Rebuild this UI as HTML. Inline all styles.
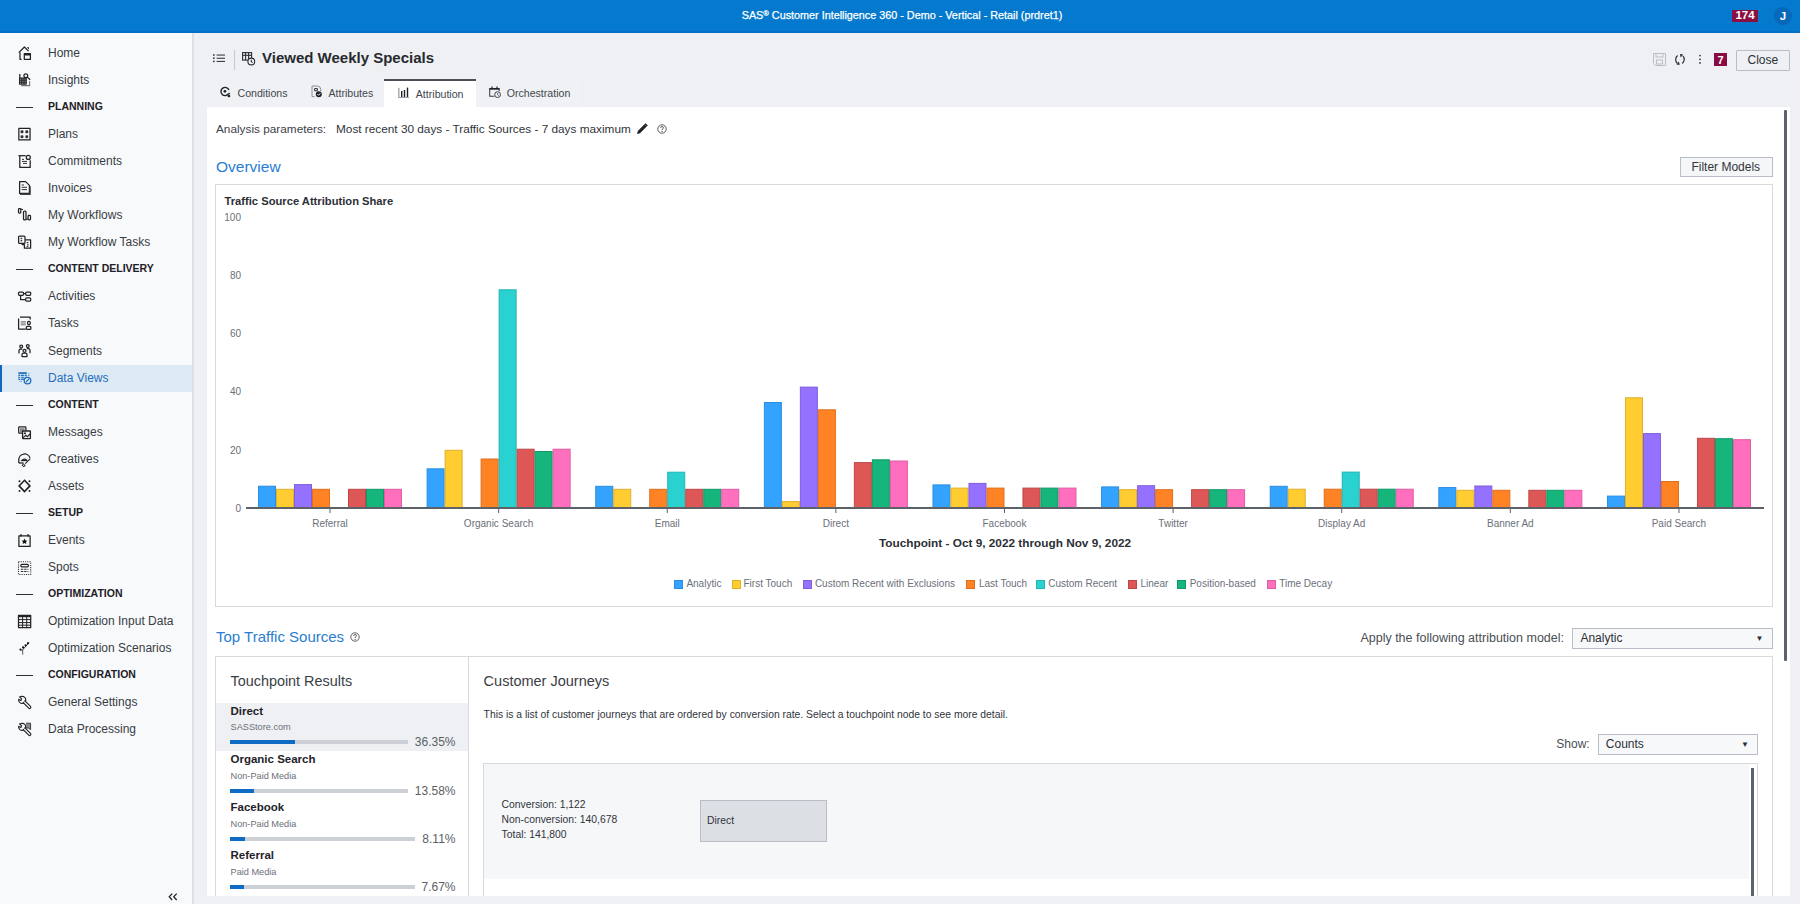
<!DOCTYPE html>
<html><head><meta charset="utf-8"><title>SAS Customer Intelligence 360</title>
<style>
html,body{margin:0;padding:0;}
body{width:1800px;height:904px;overflow:hidden;position:relative;font-family:"Liberation Sans", sans-serif;background:#eff0f3;}
.t{position:absolute;white-space:nowrap;line-height:1;}
.b{position:absolute;}
</style></head><body>
<div class="b" style="left:0px;top:0px;width:1800px;height:904px;background:#eff0f3"></div><div class="b" style="left:0px;top:0px;width:1800px;height:33px;background:#0479cd"></div><div class="b" style="left:0px;top:31px;width:1800px;height:2px;background:#0370c6"></div><div class="t" style="left:602px;width:600px;text-align:center;top:10px;font-size:10.8px;color:#ffffff;font-weight:400;letter-spacing:0px;-webkit-text-stroke:0.25px #fff">SAS<span style="font-size:7.5px;position:relative;top:-3px">®</span> Customer Intelligence 360 - Demo - Vertical - Retail (prdret1)</div><div class="b" style="left:1732px;top:10px;width:26px;height:12px;background:#8c0f42"></div><div class="t" style="left:1445px;width:600px;text-align:center;top:10px;font-size:11.5px;color:#ffffff;font-weight:700;">174</div><div class="b" style="left:1774px;top:7px;width:18px;height:18px;background:#0568b9;border-radius:50%"></div><div class="t" style="left:1483px;width:600px;text-align:center;top:11px;font-size:11.5px;color:#ffffff;font-weight:700;">J</div><div class="b" style="left:0px;top:33px;width:192px;height:871px;background:#f8f9fb"></div><div class="b" style="left:192px;top:33px;width:2px;height:871px;background:#dcdfe4"></div><svg class="b" style="left:14px;top:42px;" width="24" height="24" viewBox="0 0 24 24"><g fill="none" stroke="#222" stroke-width="1.25" stroke-linejoin="round" stroke-width="1.35"><path d="M4.8 10.6 L10.4 5 L14.6 9.1"/><path d="M6 10.2 V17.4 H7.6"/><rect x="10.3" y="11.7" width="6.1" height="5.7"/></g><rect x="10.3" y="11.6" width="6.1" height="1.9" fill="#222"/><path d="M12.8 5.3 H15 V7.6Z" fill="#222"/></svg><div class="t" style="left:48px;top:47px;font-size:12px;color:#383c43;font-weight:400;">Home</div><svg class="b" style="left:14px;top:69px;" width="24" height="24" viewBox="0 0 24 24"><g fill="none" stroke="#222" stroke-width="1.25" stroke-linejoin="round" stroke-width="1.15"><rect x="5.6" y="9" width="6.6" height="6"/><path d="M5.6 11 H12.2 M5.6 13 H12.2 M7.8 9 V15 M10 9 V15"/><path d="M5.8 5 V9"/><circle cx="11.8" cy="6.7" r="1.9"/><path d="M13.2 8.1 L16.2 10.8"/></g><path d="M7.2 16.6 H15.6 V12.3" fill="none" stroke="#777" stroke-width="1.2"/></svg><div class="t" style="left:48px;top:74px;font-size:12px;color:#383c43;font-weight:400;">Insights</div><div class="b" style="left:16px;top:107px;width:17px;height:1.3px;background:#2a2d33"></div><div class="t" style="left:48px;top:101px;font-size:10.5px;color:#1d2026;font-weight:700;">PLANNING</div><svg class="b" style="left:14px;top:123px;" width="24" height="24" viewBox="0 0 24 24"><g fill="none" stroke="#222" stroke-width="1.25" stroke-linejoin="round" stroke-width="1.3"><rect x="4.85" y="5.45" width="11.2" height="11.5"/></g><g fill="#333"><rect x="6.5" y="7.3" width="3" height="3" rx="1.1"/><rect x="11.3" y="7.3" width="3" height="3" rx="1.1"/><rect x="6.5" y="12.2" width="3" height="3" rx="1.1"/><rect x="11.3" y="12.2" width="3" height="3" rx="1.1"/></g></svg><div class="t" style="left:48px;top:128px;font-size:12px;color:#383c43;font-weight:400;">Plans</div><svg class="b" style="left:14px;top:150px;" width="24" height="24" viewBox="0 0 24 24"><g fill="none" stroke="#222" stroke-width="1.25" stroke-linejoin="round" stroke-width="1.2"><path d="M4.5 5.7 H11.6"/><path d="M5.8 5.7 V17.4 H16.2 V10.2"/><circle cx="14.3" cy="7.4" r="2"/></g><g stroke="#333" stroke-width="1"><path d="M8 9.4 H10 M8 11.4 H13 M9 13.4 H13"/></g></svg><div class="t" style="left:48px;top:155px;font-size:12px;color:#383c43;font-weight:400;">Commitments</div><svg class="b" style="left:14px;top:177px;" width="24" height="24" viewBox="0 0 24 24"><g fill="none" stroke="#222" stroke-width="1.25" stroke-linejoin="round" stroke-width="1.2"><path d="M5.6 4.6 H11.6 L15.4 8.4 V16.4 H5.6 Z"/></g><path d="M6 17.4 H16.2 V9.2" fill="none" stroke="#444" stroke-width="1.2"/><g stroke="#333" stroke-width="1"><path d="M7.6 8 H10 M7.6 10.3 H13 M7.6 12.6 H13"/></g></svg><div class="t" style="left:48px;top:182px;font-size:12px;color:#383c43;font-weight:400;">Invoices</div><svg class="b" style="left:14px;top:204px;" width="24" height="24" viewBox="0 0 24 24"><g fill="none" stroke="#222" stroke-width="1.25" stroke-linejoin="round" stroke-width="1.2"><rect x="4.5" y="4.7" width="2.3" height="4.4" rx="0.8"/><rect x="9.5" y="7.2" width="2.5" height="8.6" rx="0.9"/><rect x="14.1" y="11.4" width="2.4" height="4.4" rx="0.8"/></g><path d="M7 5 L9 5.6 M12 15.4 L14 15" stroke="#222" stroke-width="1"/></svg><div class="t" style="left:48px;top:209px;font-size:12px;color:#383c43;font-weight:400;">My Workflows</div><svg class="b" style="left:14px;top:231px;" width="24" height="24" viewBox="0 0 24 24"><g fill="none" stroke="#222" stroke-width="1.25" stroke-linejoin="round" stroke-width="1.25"><rect x="4.6" y="5" width="6.4" height="7.4" rx="0.9"/><path d="M11 8.8 H16.6 V17.2 H10.4 V13.6 H8.2 V12.4"/></g><g fill="#333"><rect x="6.6" y="6.8" width="1.6" height="1.4"/><rect x="6.6" y="9" width="1.6" height="1.4"/><rect x="12.6" y="11" width="1.8" height="1.2"/><rect x="13" y="13.2" width="1.6" height="1.2"/><rect x="12.6" y="15" width="1.8" height="1"/></g></svg><div class="t" style="left:48px;top:236px;font-size:12px;color:#383c43;font-weight:400;">My Workflow Tasks</div><div class="b" style="left:16px;top:269px;width:17px;height:1.3px;background:#2a2d33"></div><div class="t" style="left:48px;top:263px;font-size:10.5px;color:#1d2026;font-weight:700;">CONTENT DELIVERY</div><svg class="b" style="left:14px;top:285px;" width="24" height="24" viewBox="0 0 24 24"><g fill="none" stroke="#222" stroke-width="1.25" stroke-linejoin="round" stroke-width="1.25"><rect x="4.5" y="7.1" width="5" height="3.2" rx="1"/><rect x="11.7" y="7.1" width="5" height="3.2" rx="1"/><rect x="11.7" y="12.9" width="5" height="3.2" rx="1"/><path d="M6.6 10.3 V14.5 H11.7 M9.5 8.7 H11.7"/></g></svg><div class="t" style="left:48px;top:290px;font-size:12px;color:#383c43;font-weight:400;">Activities</div><svg class="b" style="left:14px;top:312px;" width="24" height="24" viewBox="0 0 24 24"><g fill="none" stroke="#222" stroke-width="1.25" stroke-linejoin="round" stroke-width="1.25"><path d="M6 5.2 H16.2 V7.6"/><path d="M4.6 6.6 V17 H11.8"/><rect x="13.6" y="9.4" width="2.6" height="3.2" rx="1"/><rect x="12.3" y="14.4" width="4.6" height="3" rx="1"/></g><rect x="6.8" y="9" width="5" height="4.4" fill="#888"/><path d="M6.8 10.4 H11.8 M6.8 11.9 H11.8" stroke="#f8f9fb" stroke-width="0.5"/></svg><div class="t" style="left:48px;top:317px;font-size:12px;color:#383c43;font-weight:400;">Tasks</div><svg class="b" style="left:14px;top:340px;" width="24" height="24" viewBox="0 0 24 24"><g fill="none" stroke="#222" stroke-width="1.25" stroke-linejoin="round" stroke-width="1.2"><circle cx="7.2" cy="6.6" r="1.4"/><circle cx="13.8" cy="6.1" r="1.4"/><circle cx="10.5" cy="10.8" r="1.5"/><path d="M5 13.6 V10.7 Q5 9.2 6.6 9.2 H8.2"/><path d="M16 13.2 V10.3 Q16 8.7 14.4 8.7 H12.8"/><path d="M8 16.6 V14.6 Q8 13 9.6 13 H11.4 Q13 13 13 14.6 V16.6 Z"/></g></svg><div class="t" style="left:48px;top:345px;font-size:12px;color:#383c43;font-weight:400;">Segments</div><div class="b" style="left:0px;top:365px;width:192px;height:27px;background:#dde9f3"></div><div class="b" style="left:0px;top:365px;width:1.5px;height:27px;background:#1565c0"></div><svg class="b" style="left:14px;top:367px;" width="24" height="24" viewBox="0 0 24 24"><rect x="4.4" y="5.2" width="8.4" height="7.8" fill="#1f6fbf"/><g stroke="#dde9f3" stroke-width="0.8"><path d="M4.4 7.4 H12.8 M4.4 9.5 H12.8 M4.4 11.3 H12.8 M6.6 7.4 V13 M10.4 7.4 V13"/></g><circle cx="13.5" cy="13.6" r="3.3" fill="#dde9f3" stroke="#1f6fbf" stroke-width="1.3"/><path d="M12 15 L15 12" stroke="#1f6fbf" stroke-width="1.1"/><path d="M14.8 6.2 V9.6" stroke="#1f6fbf" stroke-width="1" stroke-dasharray="1 0.8"/><path d="M5.6 14.4 H8" stroke="#1f6fbf" stroke-width="0.8" stroke-dasharray="0.8 0.6"/></svg><div class="t" style="left:48px;top:372px;font-size:12px;color:#1f6fbf;font-weight:400;">Data Views</div><div class="b" style="left:16px;top:405px;width:17px;height:1.3px;background:#2a2d33"></div><div class="t" style="left:48px;top:399px;font-size:10.5px;color:#1d2026;font-weight:700;">CONTENT</div><svg class="b" style="left:14px;top:421px;" width="24" height="24" viewBox="0 0 24 24"><g fill="none" stroke="#222" stroke-width="1.25" stroke-linejoin="round" stroke-width="1.25"><rect x="4.7" y="5.9" width="7.2" height="6.3" rx="0.8"/></g><rect x="6" y="7.2" width="4.6" height="3.8" fill="#888"/><rect x="8.6" y="10" width="7.8" height="7.7" rx="0.5" fill="#f8f9fb" stroke="#222" stroke-width="1.3"/><circle cx="11" cy="12.2" r="1" fill="#222"/><path d="M9.2 16.6 L11.8 14.3 L13.4 15.6 L16 13" fill="none" stroke="#222" stroke-width="1.2"/></svg><div class="t" style="left:48px;top:426px;font-size:12px;color:#383c43;font-weight:400;">Messages</div><svg class="b" style="left:14px;top:448px;" width="24" height="24" viewBox="0 0 24 24"><g fill="none" stroke="#222" stroke-width="1.25" stroke-linejoin="round" stroke-width="1.25"><path d="M4.8 15 V11.6 A5.7 5.7 0 0 1 16 10.2"/><path d="M7.4 12.8 Q10.2 9.8 13 12.4 Z" stroke-width="1.1"/><path d="M4.8 15 H9.5"/></g><path d="M16.3 10.6 L11.2 15.6" stroke="#222" stroke-width="1.1"/><path d="M9.4 15.2 L11.8 17.4 L9.8 19.2 L7.6 17.2Z" fill="#222"/><circle cx="9.7" cy="17.2" r="0.7" fill="#f8f9fb"/></svg><div class="t" style="left:48px;top:453px;font-size:12px;color:#383c43;font-weight:400;">Creatives</div><svg class="b" style="left:14px;top:475px;" width="24" height="24" viewBox="0 0 24 24"><path d="M10.5 5.3 L15.9 10.9 L10.5 16.6 L5.1 10.9 Z" fill="none" stroke="#222" stroke-width="1.6" stroke-linejoin="miter"/><g fill="#111"><circle cx="5.5" cy="6.3" r="0.95"/><circle cx="15.5" cy="6.3" r="0.95"/><circle cx="5.5" cy="15.9" r="0.95"/><circle cx="15.5" cy="15.9" r="0.95"/></g></svg><div class="t" style="left:48px;top:480px;font-size:12px;color:#383c43;font-weight:400;">Assets</div><div class="b" style="left:16px;top:513px;width:17px;height:1.3px;background:#2a2d33"></div><div class="t" style="left:48px;top:507px;font-size:10.5px;color:#1d2026;font-weight:700;">SETUP</div><svg class="b" style="left:14px;top:529px;" width="24" height="24" viewBox="0 0 24 24"><g fill="none" stroke="#222" stroke-width="1.25" stroke-linejoin="round" stroke-width="1.2"><rect x="4.9" y="6.9" width="11.2" height="10.5"/><path d="M7 5.3 V7.6 M14 5.3 V7.6" stroke-width="1.5"/></g><path d="M10.5 9.6 L11.4 11.6 L13.4 11.8 L11.9 13.1 L12.4 15.1 L10.5 14 L8.6 15.1 L9.1 13.1 L7.6 11.8 L9.6 11.6Z" fill="#111"/></svg><div class="t" style="left:48px;top:534px;font-size:12px;color:#383c43;font-weight:400;">Events</div><svg class="b" style="left:14px;top:556px;" width="24" height="24" viewBox="0 0 24 24"><rect x="4.5" y="5.7" width="12.2" height="12.8" fill="none" stroke="#333" stroke-width="1.1" stroke-dasharray="1.1 1.1"/><rect x="6.8" y="8.4" width="7.6" height="2.4" rx="1" fill="none" stroke="#222" stroke-width="1.2"/><path d="M6.8 13.2 H14.4 M6.8 15.5 H14.4" stroke="#333" stroke-width="1.1" stroke-dasharray="2.5 0.8"/></svg><div class="t" style="left:48px;top:561px;font-size:12px;color:#383c43;font-weight:400;">Spots</div><div class="b" style="left:16px;top:594px;width:17px;height:1.3px;background:#2a2d33"></div><div class="t" style="left:48px;top:588px;font-size:10.5px;color:#1d2026;font-weight:700;">OPTIMIZATION</div><svg class="b" style="left:14px;top:610px;" width="24" height="24" viewBox="0 0 24 24"><g fill="none" stroke="#222" stroke-width="1.25" stroke-linejoin="round" stroke-width="1.3"><rect x="4.5" y="5.4" width="12.2" height="12.2"/><path d="M4.5 9.6 H16.7 M4.5 12.6 H16.7 M4.5 15.2 H16.7 M8.6 6.8 V17.6 M12.7 6.8 V17.6" stroke-width="1"/></g><rect x="4.5" y="5.4" width="12.2" height="1.8" fill="#222"/></svg><div class="t" style="left:48px;top:615px;font-size:12px;color:#383c43;font-weight:400;">Optimization Input Data</div><svg class="b" style="left:14px;top:637px;" width="24" height="24" viewBox="0 0 24 24"><path d="M15 5.8 L7.5 14" stroke="#333" stroke-width="1"/><path d="M8.7 13 V17.6" stroke="#555" stroke-width="1"/><g fill="#111"><circle cx="6.5" cy="12.6" r="1.1"/><circle cx="9.1" cy="10.4" r="1.1"/><circle cx="11.6" cy="8.3" r="1.1"/><circle cx="14" cy="6.2" r="1.1"/></g></svg><div class="t" style="left:48px;top:642px;font-size:12px;color:#383c43;font-weight:400;">Optimization Scenarios</div><div class="b" style="left:16px;top:675px;width:17px;height:1.3px;background:#2a2d33"></div><div class="t" style="left:48px;top:669px;font-size:10.5px;color:#1d2026;font-weight:700;">CONFIGURATION</div><svg class="b" style="left:14px;top:691px;" width="24" height="24" viewBox="0 0 24 24"><g fill="none" stroke="#222" stroke-width="1.25" stroke-linejoin="round"><circle cx="8.2" cy="8.9" r="3.5"/></g><path d="M10.6 11.2 L15.6 16.3" stroke="#222" stroke-width="3.6" stroke-linecap="round"/><path d="M10.6 11.2 L15.6 16.3" stroke="#f8f9fb" stroke-width="1.3" stroke-linecap="round"/><circle cx="8.2" cy="8.9" r="2.3" fill="#f8f9fb"/><path d="M4.5 6.2 L8.3 9" stroke="#f8f9fb" stroke-width="2.6"/><path d="M5.2 5.6 L7.6 7.9 L6.9 9.6 L4.8 8.6" fill="none" stroke="#222" stroke-width="1.1"/></svg><div class="t" style="left:48px;top:696px;font-size:12px;color:#383c43;font-weight:400;">General Settings</div><svg class="b" style="left:14px;top:718px;" width="24" height="24" viewBox="0 0 24 24"><g fill="none" stroke="#222" stroke-width="1.25" stroke-linejoin="round"><circle cx="8.2" cy="8.9" r="3.5"/></g><path d="M10.6 11.2 L15.6 16.3" stroke="#222" stroke-width="3.6" stroke-linecap="round"/><path d="M10.6 11.2 L15.6 16.3" stroke="#f8f9fb" stroke-width="1.3" stroke-linecap="round"/><circle cx="8.2" cy="8.9" r="2.3" fill="#f8f9fb"/><path d="M4.5 6.2 L8.3 9" stroke="#f8f9fb" stroke-width="2.6"/><path d="M5.2 5.6 L7.6 7.9 L6.9 9.6 L4.8 8.6" fill="none" stroke="#222" stroke-width="1.1"/><path d="M12 5.2 H16.6 V11.6 L14.2 10 H12" fill="#888" stroke="#222" stroke-width="0.8"/></svg><div class="t" style="left:48px;top:723px;font-size:12px;color:#383c43;font-weight:400;">Data Processing</div><svg class="b" style="left:160px;top:886px;" width="24" height="18" viewBox="0 0 24 18"><path d="M12.2 7.6 L9.2 10.8 L12.2 14 M16.7 7.6 L13.7 10.8 L16.7 14" fill="none" stroke="#222" stroke-width="1.25"/></svg><svg class="b" style="left:212px;top:53px;" width="14" height="11" viewBox="0 0 14 11"><g fill="#3a3e45"><rect x="1" y="1.2" width="1.6" height="1.6"/><rect x="1" y="4.4" width="1.6" height="1.6"/><rect x="1" y="7.6" width="1.6" height="1.6"/><rect x="4.6" y="1.5" width="8.4" height="1.1"/><rect x="4.6" y="4.7" width="8.4" height="1.1"/><rect x="4.6" y="7.9" width="8.4" height="1.1"/></g></svg><div class="b" style="left:234px;top:50px;width:1px;height:20px;background:#c5c9cf"></div><svg class="b" style="left:242px;top:52px;" width="14" height="14" viewBox="0 0 14 14"><g fill="none" stroke="#2a2d33" stroke-width="1.1"><rect x="0.6" y="0.6" width="9" height="7.5"/><line x1="0.6" y1="3.3" x2="9.6" y2="3.3"/><line x1="3.6" y1="0.6" x2="3.6" y2="8"/><line x1="6.6" y1="0.6" x2="6.6" y2="8"/><circle cx="9.3" cy="9.5" r="3.4" fill="#eff0f3"/><path d="M9.3 7.7 V9.6 L10.6 10.6"/></g></svg><div class="t" style="left:262px;top:50px;font-size:15px;color:#262a30;font-weight:700;">Viewed Weekly Specials</div><svg class="b" style="left:1653px;top:53px;" width="13" height="13" viewBox="0 0 13 13"><g fill="none" stroke="#b9bec6" stroke-width="1"><path d="M0.5 0.5 H12.5 V12.5 H2.5 L0.5 10.5 Z"/><rect x="3" y="0.5" width="7" height="3.5"/><rect x="3.5" y="7" width="6" height="4"/></g></svg><svg class="b" style="left:1674px;top:54px;" width="12" height="11" viewBox="0 0 12 11"><g fill="none" stroke="#2a2d33" stroke-width="1.2"><path d="M3.6 1.6 A4.6 4.9 0 0 0 3.2 9.2"/><path d="M8.2 9.4 A4.6 4.9 0 0 0 8.8 1.8"/></g><path d="M6 0 L9.2 0.4 L6.6 3.4Z M5.6 11 L2.4 10.6 L5 7.6Z" fill="#2a2d33"/></svg><svg class="b" style="left:1698px;top:54px;" width="4" height="11" viewBox="0 0 4 11"><g fill="#2a2d33"><circle cx="2" cy="1.6" r="0.85"/><circle cx="2" cy="5.3" r="0.85"/><circle cx="2" cy="8.9" r="0.85"/></g></svg><div class="b" style="left:1714px;top:53px;width:13px;height:13px;background:#870c43"></div><div class="t" style="left:1420.5px;width:600px;text-align:center;top:55px;font-size:11px;color:#ffffff;font-weight:700;">7</div><div class="b" style="left:1736px;top:50px;width:52px;height:19px;background:#eef0f3;border:1px solid #b9bec6;border-radius:1px"></div><div class="t" style="left:1747.5px;top:54px;font-size:12px;color:#2b2f36;font-weight:400;">Close</div><div class="b" style="left:206px;top:80px;width:375px;height:27px;background:#f0f1f4"></div><div class="b" style="left:384px;top:79px;width:92px;height:28px;background:#ffffff"></div><div class="b" style="left:384px;top:79px;width:92px;height:2px;background:#4a4e55"></div><svg class="b" style="left:220px;top:86px;" width="12" height="12" viewBox="0 0 12 12"><path d="M8.6 7.6 A4.1 4.1 0 1 1 8.9 4" fill="none" stroke="#1f2329" stroke-width="1.4"/><circle cx="4.9" cy="5.3" r="1.4" fill="#1f2329"/><circle cx="9.2" cy="7.6" r="0.9" fill="#1f2329"/><rect x="7.6" y="9" width="2.6" height="2.2" rx="0.8" fill="#1f2329"/></svg><div class="t" style="left:237.5px;top:88px;font-size:10.6px;color:#43474e;font-weight:400;">Conditions</div><svg class="b" style="left:311px;top:85px;" width="12" height="13" viewBox="0 0 12 13"><path d="M1 1 H6.4 Q9.6 1 9.6 4.2 V6 M1 1 V11.6 H3.6" fill="none" stroke="#8a8e95" stroke-width="1"/><path d="M3.6 3.6 H6.4 V5.8 H3.6Z" fill="none" stroke="#2a2d33" stroke-width="1"/><circle cx="7.8" cy="9.2" r="3" fill="#1f2329"/><path d="M6.4 9.2 L7.5 10.3 L9.3 8.3" fill="none" stroke="#f0f1f4" stroke-width="1"/></svg><div class="t" style="left:328.5px;top:88px;font-size:10.6px;color:#43474e;font-weight:400;">Attributes</div><svg class="b" style="left:398px;top:87px;" width="12" height="12" viewBox="0 0 12 12"><rect x="0.3" y="0.8" width="1.1" height="10" fill="#8a8e95"/><rect x="0.3" y="10" width="10.6" height="1" fill="#9a9ea5"/><g fill="#1f2329"><rect x="3" y="4" width="1.4" height="6"/><rect x="5.8" y="3" width="1.4" height="7"/><rect x="8.8" y="0.6" width="1.4" height="9.4"/></g></svg><div class="t" style="left:415.8px;top:89px;font-size:10.6px;color:#43474e;font-weight:400;">Attribution</div><svg class="b" style="left:489px;top:86px;" width="13" height="12" viewBox="0 0 13 12"><path d="M5.4 10.2 H0.7 V2.4 H10.2 V5" fill="none" stroke="#3a3e45" stroke-width="1.05"/><rect x="0.7" y="2" width="9.5" height="1.7" fill="#1f2329"/><path d="M3 0.6 V2.4 M8 0.6 V2.4" stroke="#1f2329" stroke-width="1.2"/><circle cx="8.6" cy="8.6" r="2.9" fill="none" stroke="#3a3e45" stroke-width="1"/><path d="M8.6 7.2 V8.7 L9.6 9.5" fill="none" stroke="#3a3e45" stroke-width="0.9"/></svg><div class="t" style="left:506.7px;top:88px;font-size:10.6px;color:#43474e;font-weight:400;">Orchestration</div><div class="b" style="left:207px;top:107px;width:1583px;height:789px;background:#ffffff"></div><div class="b" style="left:1784px;top:110px;width:3px;height:551px;background:#5b6370;border-radius:1px"></div><div class="t" style="left:216px;top:124px;font-size:11.8px;color:#3d4148;font-weight:400;">Analysis parameters:</div><div class="t" style="left:336px;top:124px;font-size:11.8px;color:#30343b;font-weight:400;">Most recent 30 days - Traffic Sources - 7 days maximum</div><svg class="b" style="left:636px;top:123px;" width="12" height="12" viewBox="0 0 12 12"><path d="M1 11 L1.8 8 L8.5 1.3 L10.7 3.5 L4 10.2 Z" fill="#1f2329"/><path d="M8.5 1.3 L9.6 0.2 L11.8 2.4 L10.7 3.5Z" fill="#1f2329"/></svg><svg class="b" style="left:657px;top:124px;" width="10" height="10" viewBox="0 0 10 10"><circle cx="5" cy="5" r="4.2" fill="none" stroke="#4a4e55" stroke-width="0.9"/><path d="M3.6 3.9 Q3.7 2.5 5 2.5 Q6.4 2.5 6.4 3.8 Q6.4 4.7 5.2 5.3 V6.1" fill="none" stroke="#4a4e55" stroke-width="0.9"/><circle cx="5.1" cy="7.4" r="0.6" fill="#4a4e55"/></svg><div class="t" style="left:216px;top:159px;font-size:15.5px;color:#2a7dd0;font-weight:400;">Overview</div><div class="b" style="left:1680px;top:157px;width:93px;height:20px;background:#f5f6f8;border:1px solid #b9bec6;box-sizing:border-box"></div><div class="t" style="left:1691.4px;top:161px;font-size:12px;color:#30343b;font-weight:400;">Filter Models</div><div class="b" style="left:215px;top:184px;width:1558px;height:423px;border:1px solid #d6d9de;box-sizing:border-box"></div><div class="t" style="left:224.5px;top:196px;font-size:11.2px;color:#2b2f36;font-weight:700;">Traffic Source Attribution Share</div><div class="t" style="left:-359px;width:600px;text-align:right;top:213px;font-size:10px;color:#6b7079;font-weight:400;">100</div><div class="t" style="left:-359px;width:600px;text-align:right;top:271px;font-size:10px;color:#6b7079;font-weight:400;">80</div><div class="t" style="left:-359px;width:600px;text-align:right;top:329px;font-size:10px;color:#6b7079;font-weight:400;">60</div><div class="t" style="left:-359px;width:600px;text-align:right;top:387px;font-size:10px;color:#6b7079;font-weight:400;">40</div><div class="t" style="left:-359px;width:600px;text-align:right;top:446px;font-size:10px;color:#6b7079;font-weight:400;">20</div><div class="t" style="left:-359px;width:600px;text-align:right;top:504px;font-size:10px;color:#6b7079;font-weight:400;">0</div><svg class="b" style="left:0;top:0" width="1800" height="904"><rect x="258.50" y="486.20" width="17" height="21.80" fill="#33a3ff" stroke="#2b8ee0" stroke-width="1"/><rect x="276.50" y="489.30" width="17" height="18.70" fill="#ffcc32" stroke="#e0b02a" stroke-width="1"/><rect x="294.50" y="484.60" width="17" height="23.40" fill="#9471ff" stroke="#7f5fe0" stroke-width="1"/><rect x="312.50" y="489.30" width="17" height="18.70" fill="#ff8224" stroke="#e06f1c" stroke-width="1"/><rect x="348.50" y="489.30" width="17" height="18.70" fill="#dd5757" stroke="#bf4646" stroke-width="1"/><rect x="366.50" y="489.30" width="17" height="18.70" fill="#15b57b" stroke="#0f9a68" stroke-width="1"/><rect x="384.50" y="489.30" width="17" height="18.70" fill="#ff6fbd" stroke="#e05ca3" stroke-width="1"/><rect x="329.50" y="508" width="1" height="5" fill="#5d6168"/><rect x="427.12" y="468.80" width="17" height="39.20" fill="#33a3ff" stroke="#2b8ee0" stroke-width="1"/><rect x="445.12" y="450.30" width="17" height="57.70" fill="#ffcc32" stroke="#e0b02a" stroke-width="1"/><rect x="481.12" y="459.00" width="17" height="49.00" fill="#ff8224" stroke="#e06f1c" stroke-width="1"/><rect x="499.12" y="289.80" width="17" height="218.20" fill="#2ad1d1" stroke="#22b5b5" stroke-width="1"/><rect x="517.12" y="449.20" width="17" height="58.80" fill="#dd5757" stroke="#bf4646" stroke-width="1"/><rect x="535.12" y="451.50" width="17" height="56.50" fill="#15b57b" stroke="#0f9a68" stroke-width="1"/><rect x="553.12" y="449.20" width="17" height="58.80" fill="#ff6fbd" stroke="#e05ca3" stroke-width="1"/><rect x="498.12" y="508" width="1" height="5" fill="#5d6168"/><rect x="595.74" y="486.30" width="17" height="21.70" fill="#33a3ff" stroke="#2b8ee0" stroke-width="1"/><rect x="613.74" y="489.30" width="17" height="18.70" fill="#ffcc32" stroke="#e0b02a" stroke-width="1"/><rect x="649.74" y="489.30" width="17" height="18.70" fill="#ff8224" stroke="#e06f1c" stroke-width="1"/><rect x="667.74" y="472.20" width="17" height="35.80" fill="#2ad1d1" stroke="#22b5b5" stroke-width="1"/><rect x="685.74" y="489.30" width="17" height="18.70" fill="#dd5757" stroke="#bf4646" stroke-width="1"/><rect x="703.74" y="489.30" width="17" height="18.70" fill="#15b57b" stroke="#0f9a68" stroke-width="1"/><rect x="721.74" y="489.30" width="17" height="18.70" fill="#ff6fbd" stroke="#e05ca3" stroke-width="1"/><rect x="666.74" y="508" width="1" height="5" fill="#5d6168"/><rect x="764.36" y="402.50" width="17" height="105.50" fill="#33a3ff" stroke="#2b8ee0" stroke-width="1"/><rect x="782.36" y="501.60" width="17" height="6.40" fill="#ffcc32" stroke="#e0b02a" stroke-width="1"/><rect x="800.36" y="387.10" width="17" height="120.90" fill="#9471ff" stroke="#7f5fe0" stroke-width="1"/><rect x="818.36" y="409.80" width="17" height="98.20" fill="#ff8224" stroke="#e06f1c" stroke-width="1"/><rect x="854.36" y="462.60" width="17" height="45.40" fill="#dd5757" stroke="#bf4646" stroke-width="1"/><rect x="872.36" y="459.80" width="17" height="48.20" fill="#15b57b" stroke="#0f9a68" stroke-width="1"/><rect x="890.36" y="461.00" width="17" height="47.00" fill="#ff6fbd" stroke="#e05ca3" stroke-width="1"/><rect x="835.36" y="508" width="1" height="5" fill="#5d6168"/><rect x="932.98" y="484.90" width="17" height="23.10" fill="#33a3ff" stroke="#2b8ee0" stroke-width="1"/><rect x="950.98" y="488.10" width="17" height="19.90" fill="#ffcc32" stroke="#e0b02a" stroke-width="1"/><rect x="968.98" y="483.40" width="17" height="24.60" fill="#9471ff" stroke="#7f5fe0" stroke-width="1"/><rect x="986.98" y="488.10" width="17" height="19.90" fill="#ff8224" stroke="#e06f1c" stroke-width="1"/><rect x="1022.98" y="488.10" width="17" height="19.90" fill="#dd5757" stroke="#bf4646" stroke-width="1"/><rect x="1040.98" y="488.10" width="17" height="19.90" fill="#15b57b" stroke="#0f9a68" stroke-width="1"/><rect x="1058.98" y="488.10" width="17" height="19.90" fill="#ff6fbd" stroke="#e05ca3" stroke-width="1"/><rect x="1003.98" y="508" width="1" height="5" fill="#5d6168"/><rect x="1101.60" y="486.90" width="17" height="21.10" fill="#33a3ff" stroke="#2b8ee0" stroke-width="1"/><rect x="1119.60" y="489.70" width="17" height="18.30" fill="#ffcc32" stroke="#e0b02a" stroke-width="1"/><rect x="1137.60" y="485.70" width="17" height="22.30" fill="#9471ff" stroke="#7f5fe0" stroke-width="1"/><rect x="1155.60" y="489.70" width="17" height="18.30" fill="#ff8224" stroke="#e06f1c" stroke-width="1"/><rect x="1191.60" y="489.70" width="17" height="18.30" fill="#dd5757" stroke="#bf4646" stroke-width="1"/><rect x="1209.60" y="489.70" width="17" height="18.30" fill="#15b57b" stroke="#0f9a68" stroke-width="1"/><rect x="1227.60" y="489.70" width="17" height="18.30" fill="#ff6fbd" stroke="#e05ca3" stroke-width="1"/><rect x="1172.60" y="508" width="1" height="5" fill="#5d6168"/><rect x="1270.22" y="486.30" width="17" height="21.70" fill="#33a3ff" stroke="#2b8ee0" stroke-width="1"/><rect x="1288.22" y="489.20" width="17" height="18.80" fill="#ffcc32" stroke="#e0b02a" stroke-width="1"/><rect x="1324.22" y="489.20" width="17" height="18.80" fill="#ff8224" stroke="#e06f1c" stroke-width="1"/><rect x="1342.22" y="472.10" width="17" height="35.90" fill="#2ad1d1" stroke="#22b5b5" stroke-width="1"/><rect x="1360.22" y="489.20" width="17" height="18.80" fill="#dd5757" stroke="#bf4646" stroke-width="1"/><rect x="1378.22" y="489.20" width="17" height="18.80" fill="#15b57b" stroke="#0f9a68" stroke-width="1"/><rect x="1396.22" y="489.20" width="17" height="18.80" fill="#ff6fbd" stroke="#e05ca3" stroke-width="1"/><rect x="1341.22" y="508" width="1" height="5" fill="#5d6168"/><rect x="1438.84" y="487.60" width="17" height="20.40" fill="#33a3ff" stroke="#2b8ee0" stroke-width="1"/><rect x="1456.84" y="490.30" width="17" height="17.70" fill="#ffcc32" stroke="#e0b02a" stroke-width="1"/><rect x="1474.84" y="486.00" width="17" height="22.00" fill="#9471ff" stroke="#7f5fe0" stroke-width="1"/><rect x="1492.84" y="490.30" width="17" height="17.70" fill="#ff8224" stroke="#e06f1c" stroke-width="1"/><rect x="1528.84" y="490.30" width="17" height="17.70" fill="#dd5757" stroke="#bf4646" stroke-width="1"/><rect x="1546.84" y="490.30" width="17" height="17.70" fill="#15b57b" stroke="#0f9a68" stroke-width="1"/><rect x="1564.84" y="490.30" width="17" height="17.70" fill="#ff6fbd" stroke="#e05ca3" stroke-width="1"/><rect x="1509.84" y="508" width="1" height="5" fill="#5d6168"/><rect x="1607.46" y="496.10" width="17" height="11.90" fill="#33a3ff" stroke="#2b8ee0" stroke-width="1"/><rect x="1625.46" y="397.80" width="17" height="110.20" fill="#ffcc32" stroke="#e0b02a" stroke-width="1"/><rect x="1643.46" y="433.60" width="17" height="74.40" fill="#9471ff" stroke="#7f5fe0" stroke-width="1"/><rect x="1661.46" y="481.50" width="17" height="26.50" fill="#ff8224" stroke="#e06f1c" stroke-width="1"/><rect x="1697.46" y="438.30" width="17" height="69.70" fill="#dd5757" stroke="#bf4646" stroke-width="1"/><rect x="1715.46" y="438.70" width="17" height="69.30" fill="#15b57b" stroke="#0f9a68" stroke-width="1"/><rect x="1733.46" y="439.70" width="17" height="68.30" fill="#ff6fbd" stroke="#e05ca3" stroke-width="1"/><rect x="1678.46" y="508" width="1" height="5" fill="#5d6168"/><rect x="246" y="507" width="1518" height="2" fill="#5d6168"/></svg><div class="t" style="left:30.0px;width:600px;text-align:center;top:519px;font-size:10px;color:#6b7079;font-weight:400;">Referral</div><div class="t" style="left:198.62px;width:600px;text-align:center;top:519px;font-size:10px;color:#6b7079;font-weight:400;">Organic Search</div><div class="t" style="left:367.24px;width:600px;text-align:center;top:519px;font-size:10px;color:#6b7079;font-weight:400;">Email</div><div class="t" style="left:535.86px;width:600px;text-align:center;top:519px;font-size:10px;color:#6b7079;font-weight:400;">Direct</div><div class="t" style="left:704.48px;width:600px;text-align:center;top:519px;font-size:10px;color:#6b7079;font-weight:400;">Facebook</div><div class="t" style="left:873.0999999999999px;width:600px;text-align:center;top:519px;font-size:10px;color:#6b7079;font-weight:400;">Twitter</div><div class="t" style="left:1041.72px;width:600px;text-align:center;top:519px;font-size:10px;color:#6b7079;font-weight:400;">Display Ad</div><div class="t" style="left:1210.3400000000001px;width:600px;text-align:center;top:519px;font-size:10px;color:#6b7079;font-weight:400;">Banner Ad</div><div class="t" style="left:1378.96px;width:600px;text-align:center;top:519px;font-size:10px;color:#6b7079;font-weight:400;">Paid Search</div><div class="t" style="left:705px;width:600px;text-align:center;top:538px;font-size:11.8px;color:#2b2f36;font-weight:700;">Touchpoint - Oct 9, 2022 through Nov 9, 2022</div><div class="b" style="left:673.6px;top:579.5px;width:9px;height:9px;background:#33a3ff;border:1px solid #2b8ee0;box-sizing:border-box"></div><div class="t" style="left:686.4px;top:579px;font-size:10px;color:#6b7079;font-weight:400;">Analytic</div><div class="b" style="left:731.8px;top:579.5px;width:9px;height:9px;background:#ffcc32;border:1px solid #e0b02a;box-sizing:border-box"></div><div class="t" style="left:743.5px;top:579px;font-size:10px;color:#6b7079;font-weight:400;">First Touch</div><div class="b" style="left:802.6px;top:579.5px;width:9px;height:9px;background:#9471ff;border:1px solid #7f5fe0;box-sizing:border-box"></div><div class="t" style="left:814.9px;top:579px;font-size:10px;color:#6b7079;font-weight:400;">Custom Recent with Exclusions</div><div class="b" style="left:966.3px;top:579.5px;width:9px;height:9px;background:#ff8224;border:1px solid #e06f1c;box-sizing:border-box"></div><div class="t" style="left:979px;top:579px;font-size:10px;color:#6b7079;font-weight:400;">Last Touch</div><div class="b" style="left:1036.4px;top:579.5px;width:9px;height:9px;background:#2ad1d1;border:1px solid #22b5b5;box-sizing:border-box"></div><div class="t" style="left:1048.2px;top:579px;font-size:10px;color:#6b7079;font-weight:400;">Custom Recent</div><div class="b" style="left:1127.8px;top:579.5px;width:9px;height:9px;background:#dd5757;border:1px solid #bf4646;box-sizing:border-box"></div><div class="t" style="left:1140.5px;top:579px;font-size:10px;color:#6b7079;font-weight:400;">Linear</div><div class="b" style="left:1177.4px;top:579.5px;width:9px;height:9px;background:#15b57b;border:1px solid #0f9a68;box-sizing:border-box"></div><div class="t" style="left:1189.7px;top:579px;font-size:10px;color:#6b7079;font-weight:400;">Position-based</div><div class="b" style="left:1266.5px;top:579.5px;width:9px;height:9px;background:#ff6fbd;border:1px solid #e05ca3;box-sizing:border-box"></div><div class="t" style="left:1279.2px;top:579px;font-size:10px;color:#6b7079;font-weight:400;">Time Decay</div><div class="t" style="left:216px;top:629px;font-size:15px;color:#2a7dd0;font-weight:400;">Top Traffic Sources</div><svg class="b" style="left:350px;top:632px;" width="10" height="10" viewBox="0 0 10 10"><circle cx="5" cy="5" r="4.2" fill="none" stroke="#4a4e55" stroke-width="0.9"/><path d="M3.6 3.9 Q3.7 2.5 5 2.5 Q6.4 2.5 6.4 3.8 Q6.4 4.7 5.2 5.3 V6.1" fill="none" stroke="#4a4e55" stroke-width="0.9"/><circle cx="5.1" cy="7.4" r="0.6" fill="#4a4e55"/></svg><div class="t" style="left:964px;width:600px;text-align:right;top:632px;font-size:12.5px;color:#4a4e55;font-weight:400;">Apply the following attribution model:</div><div class="b" style="left:1572px;top:628px;width:201px;height:21px;background:#f7f8fa;border:1px solid #b9bec6;box-sizing:border-box"></div><div class="t" style="left:1580.4px;top:632px;font-size:12px;color:#2b2f36;font-weight:400;">Analytic</div><div class="t" style="left:1755.5px;top:635px;font-size:8px;color:#2b2f36;font-weight:400;">&#x25BC;</div><div class="b" style="left:215px;top:656px;width:1558px;height:260px;border:1px solid #d6d9de;box-sizing:border-box"></div><div class="b" style="left:468px;top:657px;width:1px;height:239px;background:#d6d9de"></div><div class="t" style="left:230.5px;top:674px;font-size:14.4px;color:#3a3e45;font-weight:400;">Touchpoint Results</div><div class="b" style="left:216px;top:703px;width:252px;height:48px;background:#eef0f3"></div><div class="t" style="left:230.5px;top:706px;font-size:11.5px;color:#1f2329;font-weight:700;">Direct</div><div class="t" style="left:230.5px;top:723px;font-size:9.2px;color:#6b7079;font-weight:400;">SASStore.com</div><div class="b" style="left:230px;top:740.2px;width:178.2px;height:4px;background:#cdd1d7"></div><div class="b" style="left:230px;top:740.2px;width:64.8px;height:4px;background:#0f6cc4"></div><div class="t" style="left:-144.5px;width:600px;text-align:right;top:736px;font-size:12px;color:#5a5f66;font-weight:400;">36.35%</div><div class="t" style="left:230.5px;top:754px;font-size:11.5px;color:#1f2329;font-weight:700;">Organic Search</div><div class="t" style="left:230.5px;top:772px;font-size:9.2px;color:#6b7079;font-weight:400;">Non-Paid Media</div><div class="b" style="left:230px;top:788.7px;width:178.2px;height:4px;background:#cdd1d7"></div><div class="b" style="left:230px;top:788.7px;width:24.3px;height:4px;background:#0f6cc4"></div><div class="t" style="left:-144.5px;width:600px;text-align:right;top:785px;font-size:12px;color:#5a5f66;font-weight:400;">13.58%</div><div class="t" style="left:230.5px;top:802px;font-size:11.5px;color:#1f2329;font-weight:700;">Facebook</div><div class="t" style="left:230.5px;top:820px;font-size:9.2px;color:#6b7079;font-weight:400;">Non-Paid Media</div><div class="b" style="left:230px;top:836.7px;width:184.7px;height:4px;background:#cdd1d7"></div><div class="b" style="left:230px;top:836.7px;width:15.2px;height:4px;background:#0f6cc4"></div><div class="t" style="left:-144.5px;width:600px;text-align:right;top:833px;font-size:12px;color:#5a5f66;font-weight:400;">8.11%</div><div class="t" style="left:230.5px;top:850px;font-size:11.5px;color:#1f2329;font-weight:700;">Referral</div><div class="t" style="left:230.5px;top:868px;font-size:9.2px;color:#6b7079;font-weight:400;">Paid Media</div><div class="b" style="left:230px;top:884.7px;width:184.7px;height:4px;background:#cdd1d7"></div><div class="b" style="left:230px;top:884.7px;width:14.3px;height:4px;background:#0f6cc4"></div><div class="t" style="left:-144.5px;width:600px;text-align:right;top:881px;font-size:12px;color:#5a5f66;font-weight:400;">7.67%</div><div class="t" style="left:483.6px;top:674px;font-size:14.5px;color:#3a3e45;font-weight:400;">Customer Journeys</div><div class="t" style="left:483.6px;top:710px;font-size:10.35px;color:#30343b;font-weight:400;">This is a list of customer journeys that are ordered by conversion rate. Select a touchpoint node to see more detail.</div><div class="t" style="left:1556.3px;top:738px;font-size:12px;color:#4a4e55;font-weight:400;">Show:</div><div class="b" style="left:1598px;top:734px;width:160px;height:21px;background:#f7f8fa;border:1px solid #b9bec6;box-sizing:border-box"></div><div class="t" style="left:1605.8px;top:738px;font-size:12px;color:#2b2f36;font-weight:400;">Counts</div><div class="t" style="left:1741px;top:741px;font-size:8px;color:#2b2f36;font-weight:400;">&#x25BC;</div><div class="b" style="left:483px;top:763px;width:275px;height:150px;"></div><div class="b" style="left:483px;top:763px;width:1275px;height:150px;border:1px solid #d6d9de;box-sizing:border-box;background:#fff"></div><div class="b" style="left:484px;top:764px;width:1265px;height:115px;background:#f6f7f9"></div><div class="b" style="left:1751px;top:768px;width:3px;height:130px;background:#5b6370"></div><div class="t" style="left:501.6px;top:800px;font-size:10.35px;color:#30343b;font-weight:400;">Conversion: 1,122</div><div class="t" style="left:501.6px;top:815px;font-size:10.35px;color:#30343b;font-weight:400;">Non-conversion: 140,678</div><div class="t" style="left:501.6px;top:830px;font-size:10.35px;color:#30343b;font-weight:400;">Total: 141,800</div><div class="b" style="left:700px;top:800px;width:127px;height:42px;background:#dcdfe4;border:1px solid #b9bec6;box-sizing:border-box"></div><div class="t" style="left:707px;top:816px;font-size:10.35px;color:#30343b;font-weight:400;">Direct</div><div class="b" style="left:207px;top:896px;width:1593px;height:8px;background:#eff0f3"></div><div class="b" style="left:1790px;top:107px;width:10px;height:797px;background:#eff0f3"></div>
</body></html>
